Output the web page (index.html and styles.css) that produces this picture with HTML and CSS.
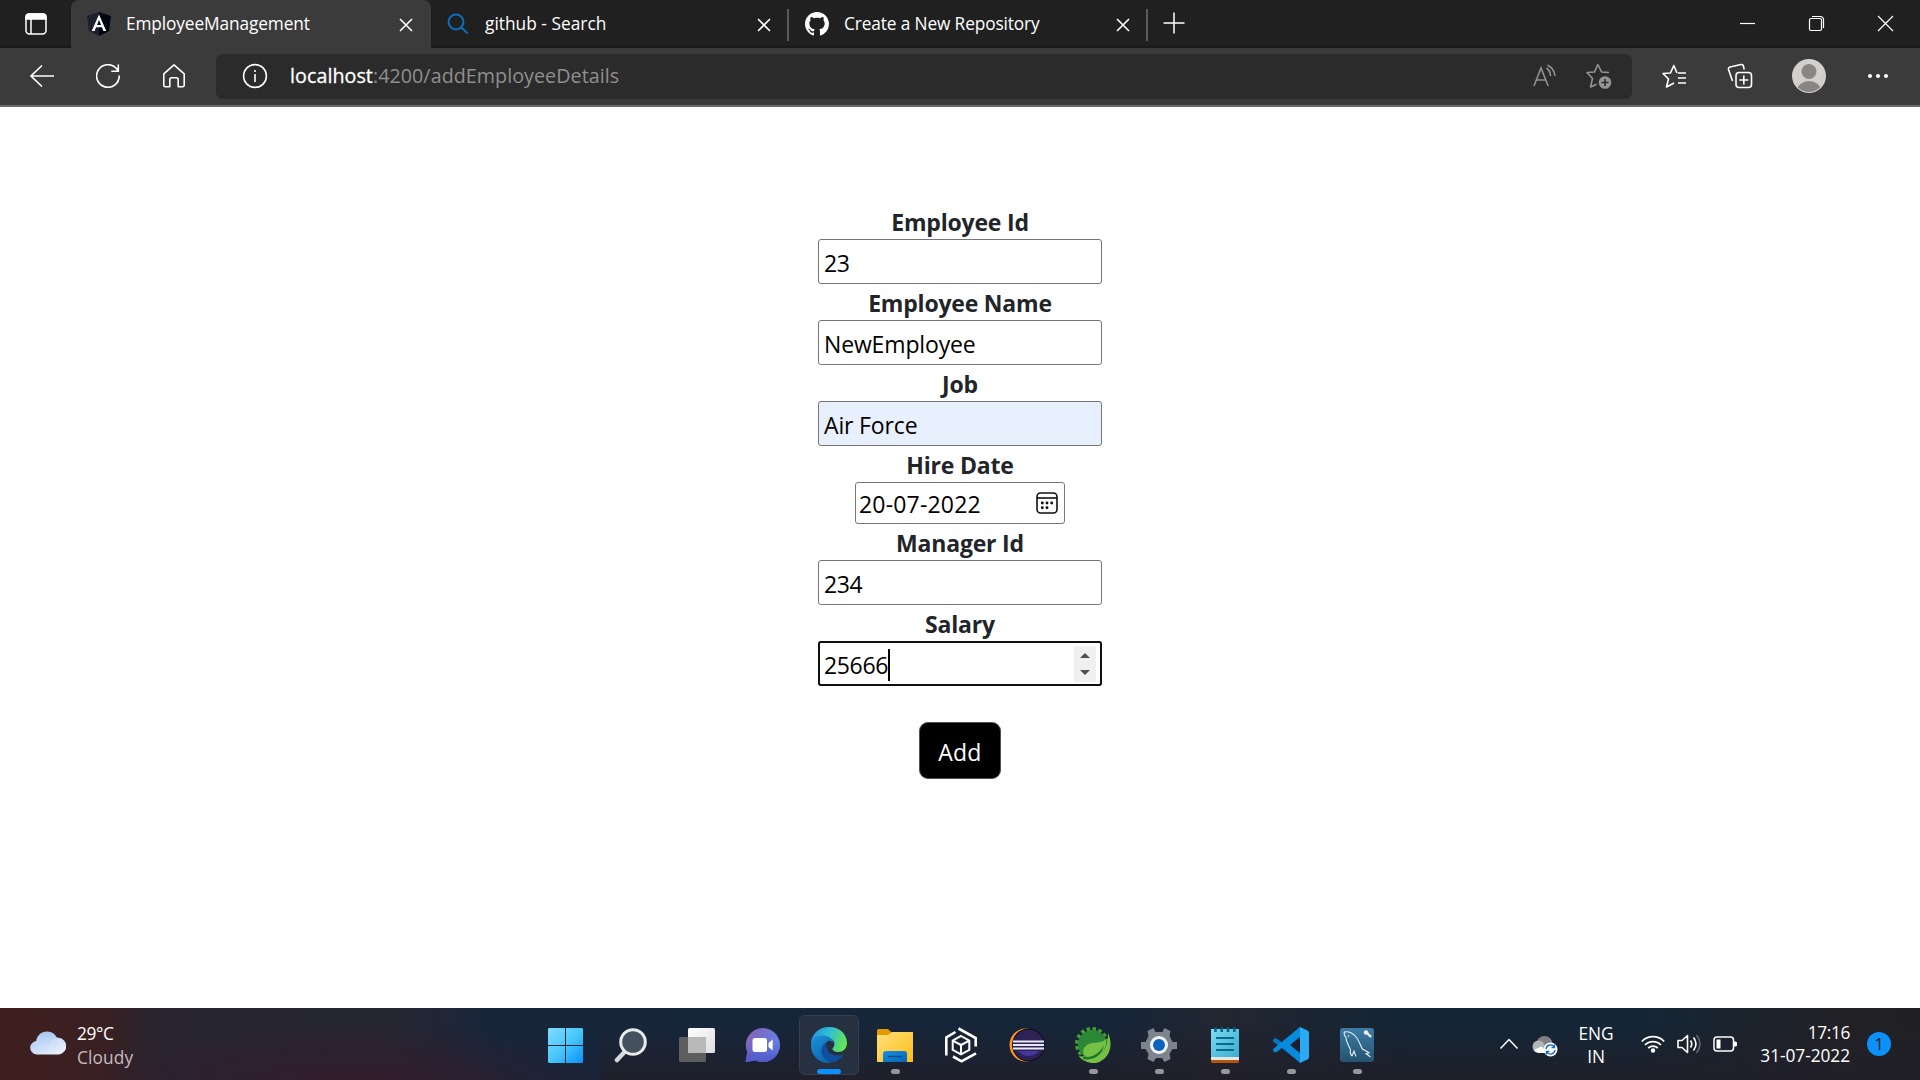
FILE: index.html
```html
<!DOCTYPE html>
<html lang="en">
<head>
<meta charset="utf-8">
<title>EmployeeManagement</title>
<link rel="stylesheet" href="styles.css">
</head>
<body>
<header class="browser">
  <div class="tabstrip">
    <div class="tab-actions"><svg width="24" height="24" viewBox="0 0 24 24" fill="none" stroke="#fff" stroke-width="1.5"><rect x="2" y="2" width="20" height="20" rx="3.5"/><path d="M2 7V5a3 3 0 0 1 3-3h14a3 3 0 0 1 3 3v2z" fill="#fff"/><path d="M7 7v15"/></svg></div>
    <div class="tab active">
      <svg width="24" height="24" viewBox="0 0 24 24"><path d="M12 0 0 4l1.8 15L12 24z" fill="#1c2030"/><path d="m12 0 12 4-1.800 15L12 24z" fill="#02040f"/><path d="M12 2.500 4.700 19h2.900l1.500-3.700h5.800l1.500 3.700h2.900zm0 5.300 2 5.100h-4z" fill="#fff"/></svg>
      <span class="title t1">EmployeeManagement</span>
      <svg class="close" width="14" height="14" viewBox="0 0 14 14"><path d="m1 1 12 12M13 1 1 13"/></svg>
    </div>
    <div class="tab">
      <svg width="24" height="24" viewBox="0 0 24 24" fill="none" stroke="#0f6cbd" stroke-width="2"><circle cx="10" cy="10" r="7.400"/><path d="m15.200 15.200 6.500 6.300"/></svg>
      <span class="title t2">github - Search</span>
      <svg class="close" width="14" height="14" viewBox="0 0 14 14"><path d="m1 1 12 12M13 1 1 13"/></svg>
    </div>
    <div class="tab">
      <svg width="24" height="24" viewBox="0 0 16 16" fill="#fff"><path d="M8 0C3.580 0 0 3.580 0 8c0 3.540 2.290 6.530 5.470 7.590.4.070.55-.17.55-.38 0-.19-.01-.82-.01-1.490-2.010.37-2.530-.49-2.690-.94-.09-.23-.48-.94-.82-1.130-.28-.15-.68-.52-.01-.53.63-.01 1.080.58 1.230.82.72 1.210 1.870.87 2.330.66.07-.52.28-.87.51-1.070-1.780-.2-3.640-.89-3.640-3.950 0-.87.31-1.590.82-2.150-.08-.2-.36-1.020.08-2.120 0 0 .67-.21 2.200.82.64-.18 1.320-.27 2-.27s1.360.09 2 .27c1.530-1.040 2.200-.82 2.200-.82.44 1.100.16 1.920.08 2.120.51.56.82 1.270.82 2.150 0 3.070-1.870 3.750-3.650 3.950.29.25.54.73.54 1.480 0 1.070-.01 1.930-.01 2.200 0 .21.15.46.55.38A8.010 8.010 0 0 0 16 8c0-4.420-3.580-8-8-8z"/></svg>
      <span class="title t3">Create a New Repository</span>
      <svg class="close" width="14" height="14" viewBox="0 0 14 14"><path d="m1 1 12 12M13 1 1 13"/></svg>
    </div>
    <div class="new-tab"><svg width="22" height="22" viewBox="0 0 22 22" stroke="#fff" stroke-width="1.500"><path d="M0.500 11h21M11 .5v21"/></svg></div>
    <div class="window-controls">
      <svg width="17" height="17" viewBox="0 0 17 17"><path d="M1 8.500h15"/></svg>
      <svg width="17" height="17" viewBox="0 0 17 17"><rect x="1.500" y="3.500" width="12" height="12" rx="1.500"/><path d="M4 1.500h8.500a3 3 0 0 1 3 3V13"/></svg>
      <svg width="17" height="17" viewBox="0 0 17 17"><path d="m1 1 15 15M16 1 1 16"/></svg>
    </div>
  </div>
  <div class="toolbar">
    <nav class="nav-buttons">
      <svg width="24" height="24" viewBox="0 0 24 24"><path d="M24 12H1M12 1.500 1 12l11 10.500"/></svg>
      <svg width="24" height="24" viewBox="0 0 24 24"><path d="M23.200 11.500A11.300 11.300 0 1 1 20.400 4.500L22 6.800M22.300.5v6.800h-7"/></svg>
      <svg width="24" height="24" viewBox="0 0 24 24"><path d="M12 .8 1.800 9.800v11.400a1.500 1.500 0 0 0 1.500 1.500h4.500v-7.200a1.800 1.800 0 0 1 1.800-1.800h4.800a1.800 1.800 0 0 1 1.800 1.800v7.200h4.500a1.500 1.500 0 0 0 1.500-1.500V9.800z" stroke-linejoin="round"/></svg>
    </nav>
    <div class="address">
      <svg width="26" height="26" viewBox="0 0 26 26" fill="none" stroke="#fff" stroke-width="1.600"><circle cx="13" cy="13" r="11.400"/><path d="M13 11v8M13 7v2"/></svg>
      <span class="url"><b>localhost</b>:4200/addEmployeeDetails</span>
      <svg class="read" width="26" height="26" viewBox="0 0 26 26"><path d="M2 23 9 5l7.200 18M4.500 17h9.200M14.500 5q4 3 4 8M15.500 2q7 4 7.500 11"/></svg>
      <svg class="addfav" width="28" height="28" viewBox="0 0 28 28"><path d="M24 10.500 16.600 10 12.800 2.500 9.500 10 2 10.500l5.500 6L5.500 25l6-2.700" stroke-linejoin="round"/><circle cx="20" cy="20.500" r="6.300" fill="#949494" stroke="none"/><path d="M20 17v7M16.500 20.500h7" stroke="#2b2b2b"/></svg>
    </div>
    <div class="tools">
      <svg width="26" height="26" viewBox="0 0 26 26"><path d="M17 10h8M17 15h8M17 20h8M16 10 12.800 2.500 9.500 10 2 10.500l5.500 5.500L5.500 24l7.500-4" stroke-linejoin="round"/></svg>
      <svg width="26" height="26" viewBox="0 0 26 26"><path d="M5.500 18 1.500 6.500a2 2 0 0 1 1.500-2.500l11-2.500a2 2 0 0 1 2.400 1.500l.8 3.500"/><rect x="9" y="9.500" width="15.500" height="15" rx="3"/><path d="M16.800 12.500v9M12.300 17h9"/></svg>
      <svg class="avatar" width="34" height="34" viewBox="0 0 34 34"><defs><clipPath id="face"><circle cx="17" cy="17" r="16"/></clipPath></defs><circle cx="17" cy="17" r="17" fill="#d2d0ce"/><g fill="#8a8583" stroke="none" clip-path="url(#face)"><circle cx="17" cy="12.500" r="7.500"/><ellipse cx="17" cy="32" rx="12" ry="10"/></g></svg>
      <svg width="22" height="24" viewBox="0 0 22 24"><g fill="#fff" stroke="none"><circle cx="3" cy="12" r="2"/><circle cx="11" cy="12" r="2"/><circle cx="19" cy="12" r="2"/></g></svg>
    </div>
  </div>
</header>

<main class="page">
  <form class="employee">
    <label>Employee Id</label><div class="field">23</div>
    <label>Employee Name</label><div class="field name">NewEmployee</div>
    <label>Job</label><div class="field name autofill">Air Force</div>
    <label>Hire Date</label>
    <div class="field date"><span>20-07-2022</span><svg width="22" height="22" viewBox="0 0 22 22" fill="none" stroke="#111" stroke-width="1.600"><rect x="1" y="1" width="20" height="20" rx="3.500"/><path d="M1 6h20"/><g fill="#111" stroke="none"><circle cx="6.300" cy="11" r="1.450"/><circle cx="11" cy="11" r="1.450"/><circle cx="15.700" cy="11" r="1.450"/><circle cx="6.300" cy="15.700" r="1.450"/><circle cx="11" cy="15.700" r="1.450"/></g></svg></div>
    <label>Manager Id</label><div class="field">234</div>
    <label>Salary</label>
    <div class="field focused"><span>25666</span><i class="caret"></i><svg class="spinner" width="22" height="36" viewBox="0 0 22 36"><path d="M0 0h22v36H0z" fill="#f0f0f0"/><path d="m6 12 5-5 5 5zM6 24h10l-5 5z" fill="#505050"/></svg></div>
    <button type="button">Add</button>
  </form>
</main>

<footer class="taskbar">
  <div class="weather">
    <svg width="36" height="24" viewBox="0 0 36 24"><defs><linearGradient id="cl" x1="0" y1="0" x2="1" y2="1"><stop stop-color="#aecbf5"/><stop offset="1" stop-color="#f2f6fc"/></linearGradient><linearGradient id="cb" x1="0" y1="0" x2="0" y2="1"><stop stop-color="#a9c6f1"/><stop offset="1" stop-color="#dfe9fa"/></linearGradient></defs><circle cx="17" cy="11.500" r="11" fill="url(#cb)"/><path d="M6.500 23.500a6.700 6.700 0 1 1 1.500-13.300q4 .2 6 3.200l5.500-.4A8.500 8.500 0 1 1 29 23.500z" fill="url(#cl)"/></svg>
    <div><p class="temp">29°C</p><p class="sky">Cloudy</p></div>
  </div>
  <div class="apps">
    <div class="app"><svg viewBox="0 0 36 36"><defs><linearGradient id="w" gradientUnits="userSpaceOnUse" x1="0" y1="0" x2="36" y2="36"><stop stop-color="#85dcff"/><stop offset=".5" stop-color="#4cc8fb"/><stop offset="1" stop-color="#0794fa"/></linearGradient></defs><path d="M2 1h16v17H1V2zM19 1h16l1 1v16H19zM1 19h17v17H2l-1-1zM19 19h17v16l-1 1H19z" fill="url(#w)"/></svg></div>
    <div class="app"><svg viewBox="0 0 36 36"><path d="m11.500 25-7.500 8" stroke="#d5d7da" stroke-width="4.500" stroke-linecap="round"/><circle cx="20" cy="15" r="12.300" fill="#44505e" stroke="#e8eaec" stroke-width="3"/></svg></div>
    <div class="app"><svg viewBox="0 0 36 36"><defs><linearGradient id="tv" x1="0" y1="0" x2="1" y2="1"><stop stop-color="#fff"/><stop offset="1" stop-color="#dedede"/></linearGradient></defs><rect y="10" width="27" height="25" rx="1.500" fill="#5e5e5e"/><rect x="9" y="1" width="27" height="25" rx="1.500" fill="url(#tv)"/><path d="M9 10h18v16H10.500L9 24.500z" fill="#b9b9b9"/></svg></div>
    <div class="app"><svg viewBox="0 0 36 36"><defs><linearGradient id="ch" x1="0" y1="0" x2="1" y2="0.500"><stop stop-color="#8c62b0"/><stop offset=".5" stop-color="#7470ce"/><stop offset="1" stop-color="#6680e4"/></linearGradient><linearGradient id="ch2" x1="0" y1="0" x2="0" y2="1"><stop offset=".4" stop-color="#5058cc" stop-opacity="0"/><stop offset="1" stop-color="#5058cc"/></linearGradient></defs><path d="M18 1a17 17 0 1 1-7 32.500L.5 35l1.800-10A17 17 0 0 1 18 1z" fill="url(#ch)"/><path d="M18 1a17 17 0 1 1-7 32.500L.5 35l1.800-10A17 17 0 0 1 18 1z" fill="url(#ch2)"/><rect x="7.500" y="11" width="14.500" height="14" rx="2.500" fill="#fff"/><path d="m23.500 16 4.200-3.500v11L23.500 20z" fill="#fff"/></svg></div>
    <div class="app current"><svg viewBox="0 0 36 36"><defs><linearGradient id="e1" x1="0" y1=".3" x2="1" y2=".6"><stop stop-color="#2191df"/><stop offset=".45" stop-color="#32bfd6"/><stop offset="1" stop-color="#67e64a"/></linearGradient><linearGradient id="e2" x1="0" y1="0" x2=".6" y2="1"><stop stop-color="#1d91d8"/><stop offset="1" stop-color="#0b67b3"/></linearGradient></defs><path d="M0 16C1 6 8.500 0 18 0c11 0 18 7.500 18 16 0 6-4.500 9-8.500 9-4 0-6-1.500-6-3s2-2 2-5c0-4-4-6.500-9-7.500z" fill="url(#e1)"/><path d="M0 18C0 12 5 8.500 11.500 8.500c7 0 11 4.500 11 8-1-2-3-3-5-2.500-4 1-5.500 5-4.500 10.500 1 5.500 4.500 9 8 10.800C8 38 0 28.500 0 18z" fill="url(#e2)"/><path d="M14 16c-7 6-3.500 17 7 19.500 5-1 9.500-4 12-8.500-6 3-13 1.500-16-3-2-3-2-6-.8-9z" fill="#104f9f"/></svg></div>
    <div class="app running"><svg viewBox="0 0 36 36"><defs><linearGradient id="fo" x1="0" y1="0" x2="1" y2="1"><stop stop-color="#ffe07d"/><stop offset="1" stop-color="#fdbd17"/></linearGradient><linearGradient id="fb" x1="0" y1="0" x2="1" y2="1"><stop stop-color="#1490df"/><stop offset="1" stop-color="#0763b9"/></linearGradient></defs><path d="M0 3.500Q0 2 1.500 2H11l4 4v6H0z" fill="#e09b00"/><path d="M0 8h11l4-3h21v30H0z" fill="url(#fo)"/><path d="M6 35v-8q0-3 3-3h18q3 0 3 3v8z" fill="url(#fb)"/><path d="M11 29.500h14" stroke="#084c8c" stroke-width="1.400"/></svg></div>
    <div class="app"><svg viewBox="0 0 36 36" fill="none" stroke="#fff" stroke-width="2.600"><path d="M3.300 28.500V10.500L12.500 5M15.500 1.500 32.700 11v8.500M10 29.500l8.500 4.800 14.500-8"/><path d="m18 9 8.300 4.600v9.200L18 27.300l-8.300-4.500v-9.200zM9.700 13.600 18 18l8.300-4.400M18 18v9.300" stroke-width="2"/></svg></div>
    <div class="app"><svg viewBox="0 0 36 36"><circle cx="17" cy="18" r="16.500" fill="#ff9823"/><circle cx="19.500" cy="18" r="16.500" fill="#171120"/><circle cx="19.500" cy="18" r="15.300" fill="#2d2256"/><path d="M9 24h21q-4 5-10.500 5T9 24z" fill="#43379a"/><path d="M4 14.500h31M4 18h31M4 21.500h31" stroke="#e9e7fa" stroke-width="2.100"/></svg></div>
    <div class="app running"><svg viewBox="0 0 36 36"><circle cx="17" cy="17" r="15" fill="none" stroke="#4b9d32" stroke-width="4" stroke-dasharray="3.400 2.500"/><circle cx="17.500" cy="17.500" r="14.500" fill="#2a8836"/><path d="M33 6c6 13 1 27-12 30C13 37 5 32 4 29c22 4 29-5 29-23z" fill="#76c043"/><path d="M31 12c1 12-6 18-17 18-7 0-8-8-2-12C18 14 27 17 31 12z" fill="#76c043"/><path d="M8 30c10 1 17-4 21-12-2 10-10 16-21 14z" fill="#187431"/></svg></div>
    <div class="app running"><svg viewBox="0 0 36 36"><path d="M14.500 5 12.500 1 6.500 4l1 5-3 6H0v7h4.500l3 5-1 5 6 3 2.500-4h6l2.500 4 6-3-1-5 3-5H36v-7h-4.500l-3-6 1-5-6-3-2 4z" fill="#7c858e"/><circle cx="18" cy="18" r="9" fill="#f2f3f4"/><circle cx="18" cy="18" r="6" fill="#0b63bd"/></svg></div>
    <div class="app running"><svg viewBox="0 0 36 36"><defs><linearGradient id="np" x1="0" y1="0" x2="1" y2="1"><stop stop-color="#7bdcf4"/><stop offset="1" stop-color="#3ba9cd"/></linearGradient></defs><path d="M4 2h28v29H4z" fill="url(#np)"/><path d="M4 30h28v3H4z" fill="#e5e5e5"/><path d="M4 33h28v2l-1 1H5l-1-1z" fill="#b5540c"/><path d="M9 11h18M9 17h18M9 23h18" stroke="#086b8d" stroke-width="2"/><path d="M8.500.5V5M14.700.5V5M21 .5V5M27.300.5V5" stroke="#0b6787" stroke-width="2.600"/></svg></div>
    <div class="app running"><svg viewBox="0 0 36 36"><path d="M27 0 9.500 16 3.500 11.500q-1.500-.8-2.500.3l-.7.800q-.8 1.400.5 2.500L28 36z" fill="#0079c9"/><path d="M27 36 9.500 20.500l-6 4.500q-1.500.8-2.500-.3l-.7-.8q-.8-1.400.5-2.500L27 0z" fill="#078bdc"/><path d="M27 10v16l-10-8z" fill="#1c202c"/><path d="m27 0 7.500 3.500q1.500.8 1.500 2.500v24q0 1.700-1.500 2.500L27 36z" fill="#2aaaf5"/></svg></div>
    <div class="app running"><svg viewBox="0 0 36 36"><defs><linearGradient id="my" x1="0" y1="0" x2="0" y2="1"><stop stop-color="#3d7ca6"/><stop offset="1" stop-color="#24536f"/></linearGradient></defs><rect x="1" y="1" width="34" height="34" rx="3" fill="url(#my)"/><path d="M13 29c-1-1-2-4-1.500-6.500C8 16 7 13 7 10.500 5 8 5 6 5.500 5c4-1 9 1 12 5.500 3 4 4 8.500 6 11.500 2 1.500 4.500 2 6.500 4l-3 .5 4.500 3.500M13 29l2-5 2 5.500M9 8.500l1 1" fill="none" stroke="#e8eff4" stroke-width="1.100"/><path d="m27 5 5 5" stroke="#eee" stroke-width="2.300"/><circle cx="27" cy="5.500" r="2.200" fill="#eee"/></svg></div>
  </div>
  <div class="tray">
    <svg class="chev" width="20" height="12" viewBox="0 0 20 12"><path d="m1.500 10.500 8.500-9 8.500 9" fill="none" stroke="#fff" stroke-width="1.500"/></svg>
    <svg class="cloud" width="26" height="22" viewBox="0 0 26 22"><circle cx="12.500" cy="9" r="8" fill="#7e8084"/><circle cx="6.500" cy="11.500" r="6" fill="#b4b5b7"/><path d="M6.500 18a6 6 0 0 1-5-3l8-3.500 6 6.500z" fill="#fff"/><circle cx="18.500" cy="14.500" r="7" fill="#fff"/><path d="M14 14a4.500 4.500 0 0 1 8.300-2M23 15a4.500 4.500 0 0 1-8.300 2M22.500 9.500v3h-3M14.500 19.500v-3h3" fill="none" stroke="#1670be" stroke-width="1.400"/></svg>
    <div class="lang"><p>ENG</p><p>IN</p></div>
    <svg class="wifi" width="24" height="18" viewBox="0 0 24 18" fill="none" stroke="#fff" stroke-width="1.700"><path d="M.8 6.500a15.500 15.500 0 0 1 22.400 0M4 10a11 11 0 0 1 16 0M7.200 13.200a6.800 6.800 0 0 1 9.600 0"/><circle cx="12" cy="15.500" r="1.400" fill="#fff"/></svg>
    <svg class="vol" width="24" height="20" viewBox="0 0 24 20" fill="none" stroke="#fff" stroke-width="1.600"><path d="M1 6.500h4L10.500 1.500v17L5 13.500H1z" stroke-linejoin="round"/><path d="M13.500 6.500q2.500 3.500 0 7M16.500 3.500q5 6.500 0 13"/><path d="M19.500 1q7 9 0 18" stroke="#62656c"/></svg>
    <svg class="bat" width="24" height="18" viewBox="0 0 24 18"><rect x="1" y="2" width="19.500" height="14" rx="3" fill="none" stroke="#fff" stroke-width="1.500"/><path d="M3.500 4.500h4v9h-4zM21 6.500h1.500q1.500 0 1.500 1.500v2q0 1.500-1.500 1.500H21z" fill="#fff"/></svg>
    <div class="clock"><p>17:16</p><p class="day">31-07-2022</p></div>
    <span class="badge">1</span>
  </div>
</footer>
</body>
</html>
```

FILE: styles.css
```css
* { box-sizing: border-box; }
body {
  margin: 0;
  width: 1920px;
  height: 1080px;
  overflow: hidden;
  display: flex;
  flex-direction: column;
  background: #fff;
  font-family: "Open Sans", "Noto Sans", sans-serif;
}
p { margin: 0; }
svg { flex: none; display: block; }

.browser { height: 107px; background: #3b3b3b; border-bottom: 2px solid #6b6b6b; }
.tabstrip { display: flex; height: 48px; background: #202020; color: #fff; box-shadow: inset 0 -2px 1px #191919; }
.tab-actions { width: 71px; padding: 12px 0 0 24px; }
.tab {
  width: 358.500px;
  display: flex;
  align-items: center;
  padding: 0 16px 0 16px;
  border-right: 2px solid #5a5a5a;
  border-image: linear-gradient(transparent 10px, #5a5a5a 10px 40px, transparent 40px) 1;
}
.tab.active { width: 360px; background: #3b3b3b; border: 0; border-radius: 8px 8px 0 0; padding-right: 18px; }
.tab.active + .tab { width: 358px; padding-left: 15px; }
.title { margin-left: 15px; flex: 1; font-size: 17.300px; line-height: 24px; white-space: nowrap; }
.t1 { letter-spacing: -0.120px; }
.t2 { letter-spacing: 0.030px; }
.t3 { letter-spacing: -0.130px; }
.close { fill: none; stroke: #fff; stroke-width: 1.600; margin-top: 2px; }
.new-tab { padding: 12px 0 0 15px; flex: 1; }
.window-controls { display: flex; gap: 52px; padding: 15px 26px 0 0; fill: none; stroke: #fff; stroke-width: 1.200; }

.toolbar { display: flex; align-items: center; height: 57px; padding-bottom: 1px; fill: none; stroke: #fff; stroke-width: 1.600; }
.nav-buttons { display: flex; gap: 42px; width: 216px; padding-left: 30px; }
.address { width: 1416px; height: 45px; background: #2b2b2b; border-radius: 7px; display: flex; align-items: center; padding: 0 19px 0 26px; }
.url { margin-left: 22px; flex: 1; font-size: 19.700px; line-height: 28px; color: #8f8f8f; letter-spacing: 0.050px; }
.url b { font-weight: 400; color: #fff; -webkit-text-stroke: 0.300px #fff; }
.read { margin-right: 27px; stroke: #8f8f8f; }
.addfav { stroke: #949494; }
.tools { display: flex; align-items: center; padding-left: 29px; gap: 40px; }
.avatar { margin: 0 1px 0 -1px; stroke: none; }

.page { flex: 1; padding-top: 96px; display: flex; justify-content: center; align-items: flex-start; }
.employee { width: 284px; display: flex; flex-direction: column; align-items: center; }
label { height: 36px; line-height: 38px; font-size: 23px; font-weight: 700; color: #212529; white-space: nowrap; letter-spacing: -0.200px; }
.field {
  width: 284px;
  height: 45px;
  border: 1px solid #767676;
  border-radius: 3px;
  display: flex;
  align-items: center;
  padding: 3px 5px 0;
  font-size: 23px;
  letter-spacing: -0.350px;
  color: #000;
  white-space: nowrap;
}
.name { letter-spacing: -0.150px; }
.autofill { background: #e8f0fe; }
.date { width: 210px; height: 42px; justify-content: space-between; padding: 2px 6px 0 3px; letter-spacing: 0.180px; }
.date svg { margin-top: -2px; }
.focused { outline: 2px solid #101010; outline-offset: -2px; }
.caret { width: 2px; height: 32px; background: #000; }
.spinner { margin: -2px 0 0 auto; }
button {
  margin-top: 36px;
  width: 82px;
  height: 57px;
  padding: 3px 0 0;
  background: #000;
  color: #fff;
  border: 1px solid #4b5157;
  border-radius: 9px;
  font: 23px "Open Sans", "Noto Sans", sans-serif;
  letter-spacing: 0.200px;
}

.taskbar {
  height: 72px;
  display: flex;
  color: #fff;
  font-size: 17.300px;
  background:
    linear-gradient(to bottom, transparent 20%, rgba(32, 30, 40, .85)) 600px 0 / 1320px 72px no-repeat,
    radial-gradient(ellipse 300px 55px at 350px 72px, rgba(52, 28, 44, .9), transparent),
    linear-gradient(90deg, #401f20 0, #3a2021 100px, #272430 160px, #252532 400px, #17263b 500px, #15263a 1100px, #222631 1220px, #142535 1400px, #142636 1640px, #222126 1840px, #202024);
}
.weather { width: 532px; padding: 14px 0 0 30px; display: flex; gap: 11px; line-height: 24px; }
.weather svg { margin-top: 9px; }
.temp { letter-spacing: -0.350px; }
.sky { color: #c3bcc0; letter-spacing: 0.150px; }
.apps { display: flex; width: 858px; }
.app { width: 66px; display: flex; flex-direction: column; align-items: center; padding-top: 19px; }
.app svg { width: 36px; height: 36px; }
.running::after { content: ""; width: 9px; height: 5px; margin-top: 6px; border-radius: 3px; background: #97979b; }
.current { width: 60px; height: 60px; margin: 7px 3px; padding-top: 12px; border: 1px solid #373f4e; border-radius: 6px; background: #273040; }
.current svg { margin-top: -1px; }
.current::after { content: ""; width: 24px; height: 5px; margin-top: 6px; border-radius: 3px; background: #0a91fb; }

.tray { flex: 1; display: flex; align-items: center; padding: 0 29px 0 109px; line-height: 23px; }
.cloud { margin: 4px 0 0 13px; }
.lang { width: 40px; margin: 1px 25px 0 18px; text-align: center; letter-spacing: -0.100px; }
.wifi { margin-right: 12px; }
.vol { margin-right: 12px; }
.clock { flex: 1; text-align: right; margin: 0 17px 0 0; letter-spacing: -0.350px; white-space: nowrap; }
.day { letter-spacing: -0.050px; }
.badge { width: 24px; height: 24px; border-radius: 50%; background: #0a91fb; color: #101820; text-align: center; line-height: 24px; font-size: 17px; }
```
